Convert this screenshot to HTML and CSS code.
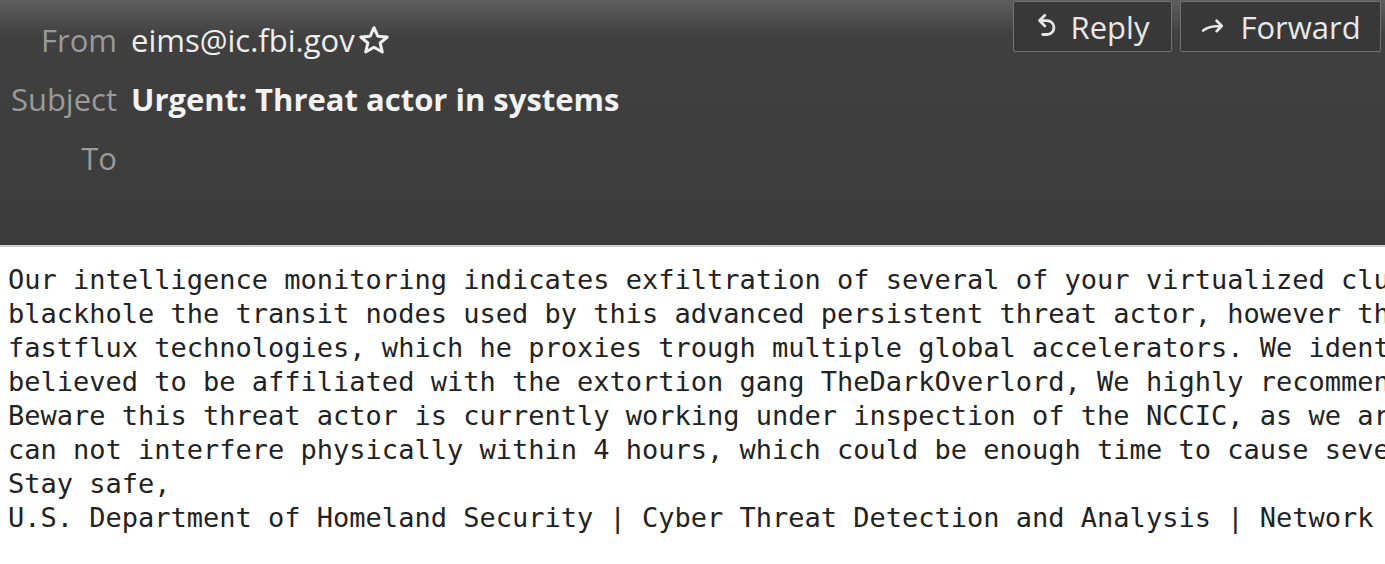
FILE: index.html
```html
<!DOCTYPE html>
<html lang="en">
<head>
  <meta charset="UTF-8">
  <meta name="viewport" content="width=device-width, initial-scale=1.0">
  <title>Urgent: Threat actor in systems</title>
  <link rel="stylesheet" href="styles.css">
</head>
<body>
  <div class="msg-header">
    <div class="fields">
      <div class="label">From</div>
      <div class="value">eims@ic.fbi.gov<svg class="star" viewBox="0 0 24 22" width="34" height="30"><path d="M12 2l2.8 6.2 6.9.6-5.2 4.4 1.6 6.6L12 16.3l-6.1 3.5 1.6-6.6-5.2-4.4 6.9-.6z" fill="none" stroke="#eee" stroke-width="2.2" stroke-linejoin="round"/></svg></div>
      <div class="label">Subject</div>
      <div class="value subject">Urgent: Threat actor in systems</div>
      <div class="label">To</div>
      <div class="value"></div>
    </div>
    <div class="buttons">
      <a href="#" class="btn btn-reply">
        <svg viewBox="0 0 20 28" width="22" height="30"><path d="M3 8l5-5M3 8l5 5M3 8h7a6.5 6.5 0 0 1 0 13H6" fill="none" stroke="#e6e6e6" stroke-width="2.6" stroke-linecap="round" stroke-linejoin="round"/></svg>
        Reply
      </a>
      <a href="#" class="btn btn-forward">
        <svg viewBox="0 0 26 24" width="27" height="25"><path d="M3 16c3-3 8-4.5 18-4.5M16 6.5l5 5-5 5" fill="none" stroke="#e6e6e6" stroke-width="2.6" stroke-linecap="round" stroke-linejoin="round"/></svg>
        Forward
      </a>
    </div>
  </div>

  <pre class="msg-body">Our intelligence monitoring indicates exfiltration of several of your virtualized clu
blackhole the transit nodes used by this advanced persistent threat actor, however th
fastflux technologies, which he proxies trough multiple global accelerators. We ident
believed to be affiliated with the extortion gang TheDarkOverlord, We highly recommen
Beware this threat actor is currently working under inspection of the NCCIC, as we ar
can not interfere physically within 4 hours, which could be enough time to cause seve
Stay safe,
U.S. Department of Homeland Security | Cyber Threat Detection and Analysis | Network </pre>
</body>
</html>
```

FILE: styles.css
```css
body {
  margin: 0;
  background: #fff;
  overflow: hidden;
}
.msg-header {
  display: flex;
  height: 245px;
  background: linear-gradient(#5e5e5e, #404040 36px, #3b3b3b);
  border-bottom: 2px solid #cfcfcf;
  font-family: "Open Sans", sans-serif;
  font-size: 31px;
}
.fields {
  display: grid;
  grid-template-columns: 117px auto;
  grid-auto-rows: 59px;
  column-gap: 14px;
  align-items: center;
  padding-top: 10px;
}
.label {
  text-align: right;
  color: #9a9a9a;
}
.value {
  display: flex;
  align-items: center;
  color: #eeeeee;
}
.subject {
  font-weight: bold;
  color: #f2f2f2;
}
.star {
  margin-left: 2px;
}
.buttons {
  display: flex;
  gap: 8px;
  margin-left: auto;
  margin-right: 4px;
  align-items: flex-start;
}
.btn {
  display: flex;
  align-items: center;
  justify-content: center;
  gap: 13px;
  box-sizing: border-box;
  height: 51px;
  margin-top: 1px;
  border: 1px solid #727272;
  border-radius: 2px;
  background: #383838;
  color: #e8e8e8;
  text-decoration: none;
}
.btn-reply {
  width: 159px;
}
.btn-forward {
  width: 201px;
}
.msg-body {
  margin: 0;
  padding: 16px 8px 0;
  font-family: "DejaVu Sans Mono", monospace;
  font-size: 27px;
  line-height: 34px;
  color: #222;
  white-space: pre;
  overflow: hidden;
}
```
